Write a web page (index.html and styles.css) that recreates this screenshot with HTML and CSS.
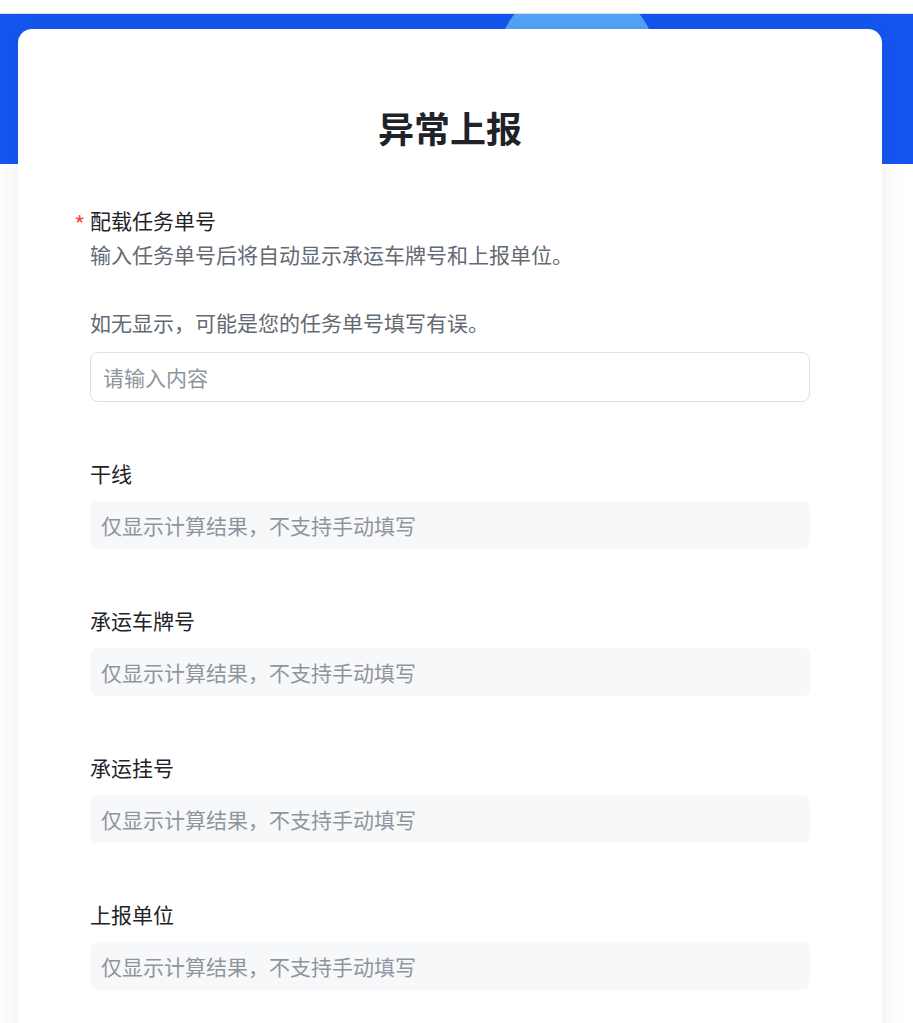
FILE: index.html
```html
<!DOCTYPE html>
<html lang="zh-CN">
<head>
    <meta charset="UTF-8">
    <meta name="viewport" content="width=device-width, initial-scale=1.0">
    <title>异常上报</title>
    <link rel="stylesheet" href="styles.css">
</head>
<body>

    <div class="topbar"></div>

    <div class="page">
        <div class="banner">
            <div class="banner-circle"></div>
        </div>

        <div class="card">
            <h1 class="title">异常上报</h1>

            <form class="report-form">
                <div class="field field-first">
                    <div class="label required">配载任务单号</div>
                    <div class="desc">
                        输入任务单号后将自动显示承运车牌号和上报单位。<br><br>如无显示，可能是您的任务单号填写有误。
                    </div>
                    <input type="text" class="text-input" placeholder="请输入内容">
                </div>

                <div class="field">
                    <div class="label">干线</div>
                    <input type="text" class="calc-input" placeholder="仅显示计算结果，不支持手动填写" readonly>
                </div>

                <div class="field">
                    <div class="label">承运车牌号</div>
                    <input type="text" class="calc-input" placeholder="仅显示计算结果，不支持手动填写" readonly>
                </div>

                <div class="field">
                    <div class="label">承运挂号</div>
                    <input type="text" class="calc-input" placeholder="仅显示计算结果，不支持手动填写" readonly>
                </div>

                <div class="field">
                    <div class="label">上报单位</div>
                    <input type="text" class="calc-input" placeholder="仅显示计算结果，不支持手动填写" readonly>
                </div>
            </form>
        </div>
    </div>

</body>
</html>
```

FILE: styles.css
```css
body {
    margin: 0;
    font-family: "Noto Sans CJK SC", "Noto Sans", sans-serif;
    background: #ffffff;
    color: #1f2329;
}

.topbar {
    height: 13px;
    background: #ffffff;
    border-bottom: 1px solid #dcdcdc;
}

.page {
    position: relative;
    padding: 15px 31px 0 18px;
}

.banner {
    position: absolute;
    top: 0;
    left: 0;
    right: 0;
    height: 150px;
    background: #1456f0;
    overflow: hidden;
}

.banner-circle {
    position: absolute;
    left: 497px;
    top: -30px;
    width: 160px;
    height: 160px;
    border-radius: 50%;
    background: #52a5f9;
}

.card {
    position: relative;
    background: #ffffff;
    border-radius: 14px 14px 0 0;
    padding: 73px 72px 40px;
    box-shadow: 0 0 30px rgba(0, 0, 0, 0.07);
    min-height: 1000px;
}

.title {
    margin: 0 0 51px;
    font-size: 36px;
    line-height: 50px;
    font-weight: 700;
    text-align: center;
    color: #1f2329;
}

.report-form {
    display: flex;
    flex-direction: column;
    gap: 54px;
}

.field {
    display: flex;
    flex-direction: column;
}

.label {
    font-size: 21px;
    line-height: 34px;
    color: #1f2329;
    margin-bottom: 11px;
}

.field-first .label {
    margin-bottom: 0;
}

.required::before {
    content: "*";
    display: inline-block;
    width: 16px;
    margin-left: -16px;
    color: #f54a45;
    font-size: 24px;
    line-height: 20px;
    vertical-align: -5px;
}

.desc {
    font-size: 21px;
    line-height: 34px;
    color: #646a73;
    margin-bottom: 13px;
}

.text-input,
.calc-input {
    box-sizing: border-box;
    width: 100%;
    font-family: inherit;
    font-size: 21px;
    padding: 0 12px;
    border-radius: 8px;
    outline: none;
}

.text-input {
    height: 50px;
    border: 1px solid #dee0e3;
    background: #ffffff;
}

.calc-input {
    height: 48px;
    border: none;
    padding-left: 11px;
    background: #f7f8fa;
}

.text-input::placeholder,
.calc-input::placeholder {
    color: #8f959e;
}
```
